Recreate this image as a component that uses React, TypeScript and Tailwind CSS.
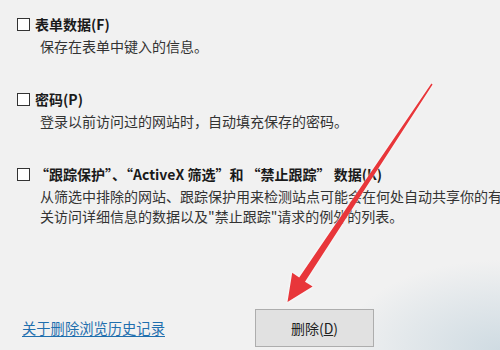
import React from 'react';

const font = { fontFamily: '"Microsoft YaHei", "Noto Sans CJK SC", "Noto Sans", sans-serif' };

function Box() {
  return <span className="block w-[13px] h-[13px] shrink-0 border border-[#333] bg-white" />;
}

function Option({ label, lines, className }: { label: React.ReactNode; lines: string[]; className?: string }) {
  return (
    <div className={className}>
      <div className="flex items-center h-[20px] pl-[17px] gap-[5px]">
        <Box />
        <span className="font-bold text-[14px] text-[#1a1a1a] whitespace-nowrap leading-[20px]">{label}</span>
      </div>
      <div className="mt-[2px] pl-[40px]">
        {lines.map((l, i) => (
          <div key={i} className="text-[14px] leading-[20px] text-[#333] whitespace-nowrap">{l}</div>
        ))}
      </div>
    </div>
  );
}

export default function App() {
  return (
    <div
      style={font}
      className="relative w-[500px] h-[350px] overflow-hidden flex flex-col bg-[#f1f1f1] bg-[radial-gradient(ellipse_160px_90px_at_500px_350px,#cfdbe2_0%,#e3e8eb_60%,#f1f1f1_100%)]"
    >
      <Option className="mt-[14px]" label="表单数据(F)" lines={['保存在表单中键入的信息。']} />
      <Option className="mt-[33px]" label="密码(P)" lines={['登录以前访问过的网站时，自动填充保存的密码。']} />
      <Option
        className="mt-[33px]"
        label="“跟踪保护”、“ActiveX 筛选”和 “禁止跟踪” 数据(K)"
        lines={['从筛选中排除的网站、跟踪保护用来检测站点可能会在何处自动共享你的有', '关访问详细信息的数据以及"禁止跟踪"请求的例外的列表。']}
      />

      <div className="mt-auto flex items-end pb-[3px]">
        <a className="ml-[22px] mb-[9px] text-[14.3px] leading-[20px] text-[#1f6fae] underline underline-offset-2 cursor-pointer">
          关于删除浏览历史记录
        </a>
        <button className="ml-[90px] w-[119px] h-[38px] border border-[#adadad] bg-[#e1e1e1] text-[14px] text-[#222]">
          删除(<span className="underline">D</span>)
        </button>
      </div>

      {/* red annotation arrow */}
      <svg className="absolute inset-0 pointer-events-none" width="500" height="350" viewBox="0 0 500 350">
        <defs>
          <filter id="glow" x="-20%" y="-20%" width="140%" height="140%">
            <feGaussianBlur stdDeviation="1.2" />
          </filter>
        </defs>
        <polygon
          points="432.6,84.4 431.4,83.6 298.7,277.2 291.7,272.4 287,303 313.3,286.8 305.4,281.6"
          fill="#ffffff"
          opacity="0.8"
          filter="url(#glow)"
        />
        <polygon
          points="432.6,84.4 431.4,83.6 299.2,277.4 292.2,272.8 287.5,302 312.6,286.6 305.0,281.8"
          fill="#e8363a"
        />
      </svg>
    </div>
  );
}
